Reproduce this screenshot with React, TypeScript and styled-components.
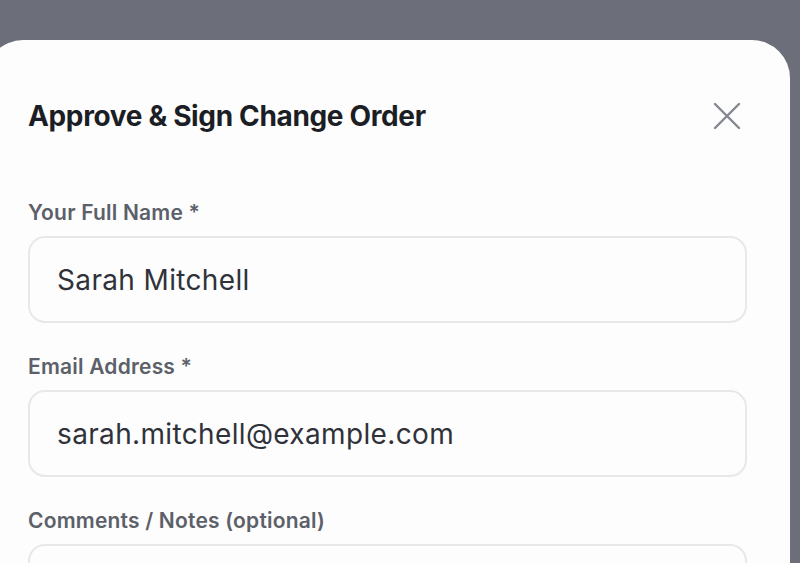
import React from "react";
import styled, { createGlobalStyle } from "styled-components";

const Global = createGlobalStyle`
  html, body { margin: 0; padding: 0; height: 100%; }
  body { background: #6c6f79; font-family: Inter, "Noto Sans", sans-serif; overflow: hidden; }
`;

const Page = styled.div`
  width: 800px;
  height: 563px;
  overflow: hidden;
  padding-top: 40px;
  box-sizing: border-box;
`;

const Modal = styled.div`
  margin-left: -15px;
  width: 805px;
  height: 560px;
  background: #fdfdfd;
  border-radius: 38px;
  box-sizing: border-box;
  padding: 58px 43px 0 43px;
`;

const Header = styled.div`
  display: flex;
  align-items: center;
  justify-content: space-between;
  margin-bottom: 67px;
`;

const Title = styled.h2`
  margin: 0;
  font-size: 28px;
  font-weight: 700;
  letter-spacing: -0.35px;
  color: #1c1e25;
  line-height: 36px;
`;

const CloseButton = styled.button`
  border: none;
  background: none;
  padding: 0;
  margin-right: 5px;
  width: 30px;
  height: 30px;
  display: flex;
  align-items: center;
  justify-content: center;
  color: #84878f;
`;

const Field = styled.div`
  display: flex;
  flex-direction: column;
  gap: 11px;
  margin-bottom: 32px;
`;

const Label = styled.label`
  font-size: 21px;
  font-weight: 600;
  letter-spacing: 0.2px;
  color: #5b6069;
  line-height: 24px;
`;

const InputBox = styled.div`
  height: 87px;
  box-sizing: border-box;
  border: 2px solid #e7e8ea;
  border-radius: 17px;
  background: #fdfdfd;
  display: flex;
  align-items: center;
  padding-left: 27px;
  font-size: 28px;
  letter-spacing: 0.35px;
  color: #303239;
`;

export default function App() {
  return (
    <>
      <Global />
      <Page>
        <Modal>
          <Header>
            <Title>Approve &amp; Sign Change Order</Title>
            <CloseButton aria-label="Close">
              <svg width="28" height="28" viewBox="0 0 28 28" fill="none" stroke="currentColor" strokeWidth="2.4" strokeLinecap="round">
                <path d="M2 2 L26 26 M26 2 L2 26" />
              </svg>
            </CloseButton>
          </Header>
          <Field>
            <Label>Your Full Name *</Label>
            <InputBox>Sarah Mitchell</InputBox>
          </Field>
          <Field>
            <Label>Email Address *</Label>
            <InputBox>sarah.mitchell@example.com</InputBox>
          </Field>
          <Field>
            <Label>Comments / Notes (optional)</Label>
            <InputBox />
          </Field>
        </Modal>
      </Page>
    </>
  );
}
